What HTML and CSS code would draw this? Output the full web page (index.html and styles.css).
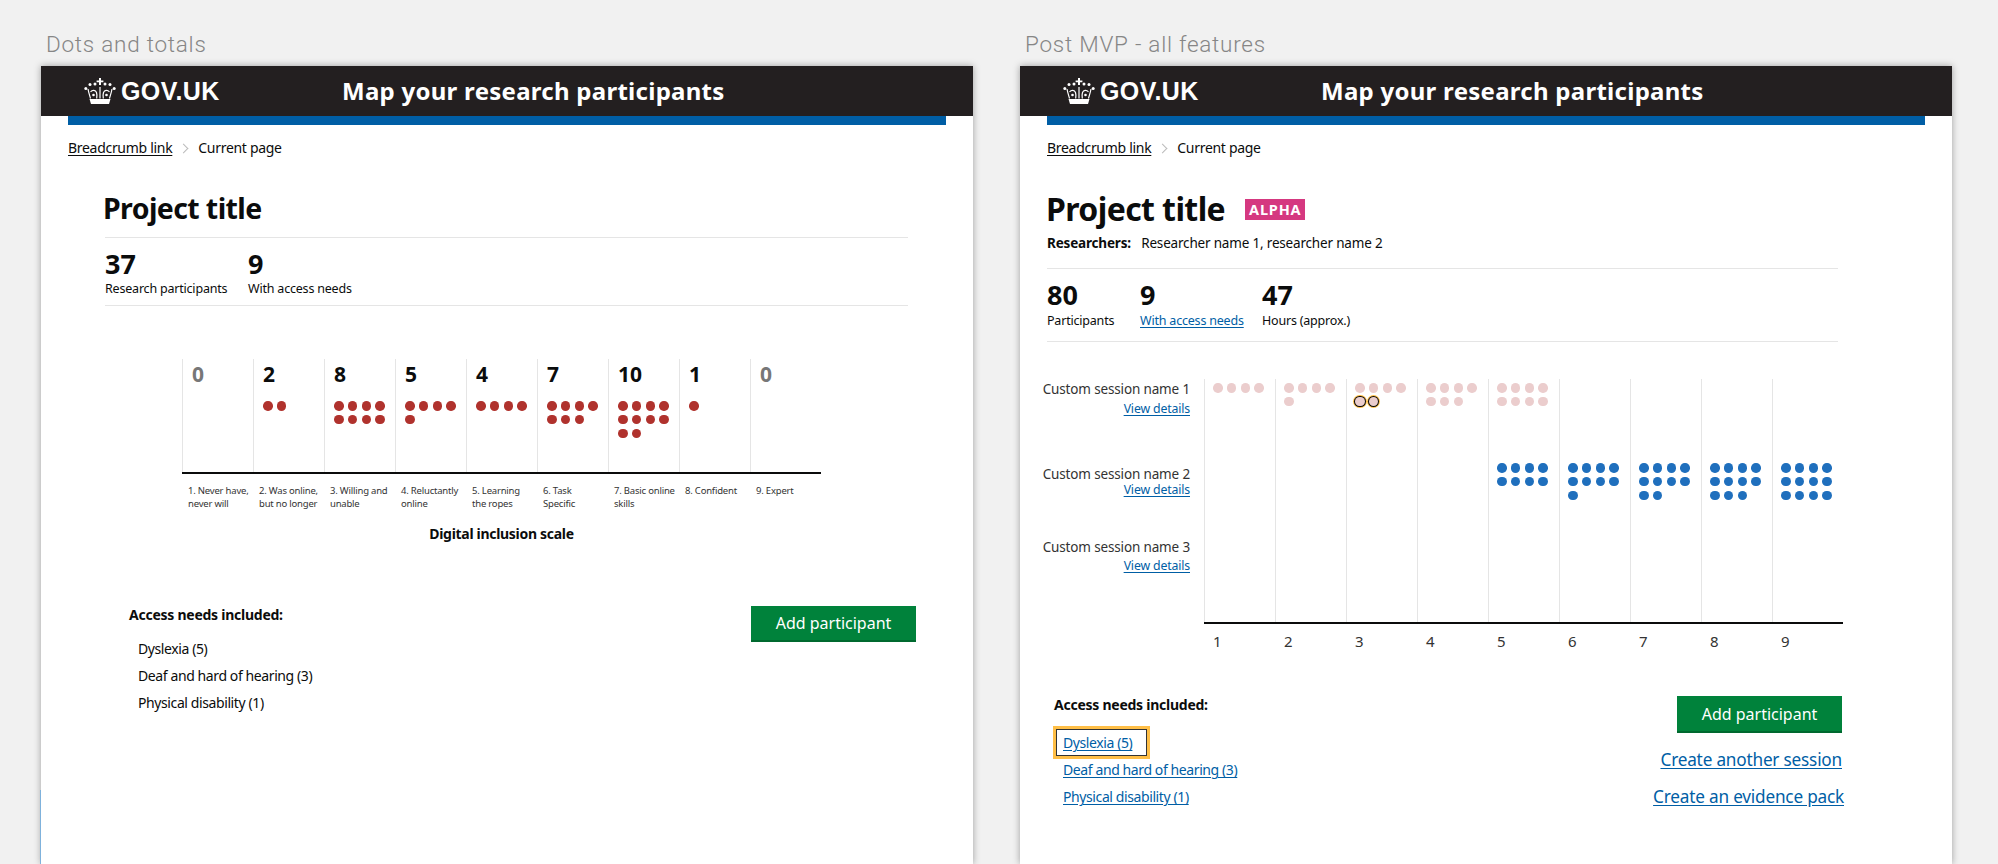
FILE: index.html
```html
<!DOCTYPE html>
<html lang="en">
  <head>
    <meta charset="UTF-8" />
    <meta name="viewport" content="width=device-width, initial-scale=1.0" />
    <title>Map your research participants</title>
    <link rel="stylesheet" href="styles.css">
  </head>
  <body>
    <div class="board">
      <!-- Dots and totals -->
      <section class="artboard">
        <h2 class="artboard-name">Dots and totals</h2>
        <div class="frame">
          <span class="frame-sliver"></span>
          <header class="site-header">
            <div class="logo">
              <svg class="crown" viewBox="0 0 32 26" aria-hidden="true">
                <path class="crown-fill" d="M15 0h2v2.500h2.400v1.800H17V7h-2V4.300h-2.400V2.500H15z" />
                <path class="crown-fill" d="M5.500 21h21l-1.500 5H7z" />
                <path class="crown-line" d="M4 11c.5 3 1.500 6 2.500 9.500M28 11c-.5 3-1.500 6-2.500 9.500M6.500 14c2-2.500 5-2 6 .5.500 1.500.500 4 .2 6M25.500 14c-2-2.500-5-2-6 .5-.5 1.500-.5 4-.2 6M16 9v11.500" />
                <circle class="crown-fill" cx="1.800" cy="10.500" r="1.500" />
                <circle class="crown-fill" cx="6" cy="6.500" r="1.500" />
                <circle class="crown-fill" cx="11" cy="6" r="1.500" />
                <circle class="crown-fill" cx="21" cy="6" r="1.500" />
                <circle class="crown-fill" cx="26" cy="6.500" r="1.500" />
                <circle class="crown-fill" cx="30.200" cy="10.500" r="1.500" />
                <circle class="crown-fill" cx="9.500" cy="17" r="1.300" />
                <circle class="crown-fill" cx="22.500" cy="17" r="1.300" />
              </svg>
              <span class="logo-text">GOV.UK</span>
            </div>
            <span class="service-name">Map your research participants</span>
          </header>
          <div class="header-bar"></div>
          <nav class="breadcrumb">
            <a href="#">Breadcrumb link</a>
            <span class="chevron"></span>
            <span>Current page</span>
          </nav>

          <div class="content content-dots">
            <h1 class="project-title">Project title</h1>
            <div class="stats">
              <div class="stat stat-research">
                <div class="stat-number">37</div>
                <div class="stat-label">Research participants</div>
              </div>
              <div class="stat">
                <div class="stat-number">9</div>
                <div class="stat-label">With access needs</div>
              </div>
            </div>

            <div class="scale">
              <div class="scale-plot">
                <div class="scale-col"><div class="scale-count muted">0</div></div>
                <div class="scale-col"><div class="scale-count">2</div><div class="dots"><i></i><i></i></div></div>
                <div class="scale-col"><div class="scale-count">8</div><div class="dots"><i></i><i></i><i></i><i></i><i></i><i></i><i></i><i></i></div></div>
                <div class="scale-col"><div class="scale-count">5</div><div class="dots"><i></i><i></i><i></i><i></i><i></i></div></div>
                <div class="scale-col"><div class="scale-count">4</div><div class="dots"><i></i><i></i><i></i><i></i></div></div>
                <div class="scale-col"><div class="scale-count">7</div><div class="dots"><i></i><i></i><i></i><i></i><i></i><i></i><i></i></div></div>
                <div class="scale-col"><div class="scale-count">10</div><div class="dots"><i></i><i></i><i></i><i></i><i></i><i></i><i></i><i></i><i></i><i></i></div></div>
                <div class="scale-col"><div class="scale-count">1</div><div class="dots"><i></i></div></div>
                <div class="scale-col"><div class="scale-count muted">0</div></div>
              </div>
              <div class="scale-labels">
                <span>1. Never have,<br />never will</span>
                <span>2. Was online,<br />but no longer</span>
                <span>3. Willing and<br />unable</span>
                <span>4. Reluctantly<br />online</span>
                <span>5. Learning<br />the ropes</span>
                <span>6. Task<br />Specific</span>
                <span>7. Basic online<br />skills</span>
                <span>8. Confident</span>
                <span>9. Expert</span>
              </div>
              <div class="scale-caption">Digital inclusion scale</div>
            </div>

            <div class="lower">
              <div>
                <div class="needs-title">Access needs included:</div>
                <ul class="needs">
                  <li>Dyslexia (5)</li>
                  <li>Deaf and hard of hearing (3)</li>
                  <li>Physical disability (1)</li>
                </ul>
              </div>
              <button class="add-button">Add participant</button>
            </div>
          </div>
        </div>
      </section>

      <!-- Post MVP -->
      <section class="artboard">
        <h2 class="artboard-name">Post MVP - all features</h2>
        <div class="frame">
          <header class="site-header">
            <div class="logo">
              <svg class="crown" viewBox="0 0 32 26" aria-hidden="true">
                <path class="crown-fill" d="M15 0h2v2.500h2.400v1.800H17V7h-2V4.300h-2.400V2.500H15z" />
                <path class="crown-fill" d="M5.500 21h21l-1.500 5H7z" />
                <path class="crown-line" d="M4 11c.5 3 1.500 6 2.500 9.500M28 11c-.5 3-1.500 6-2.500 9.500M6.500 14c2-2.500 5-2 6 .5.500 1.500.500 4 .2 6M25.500 14c-2-2.500-5-2-6 .5-.5 1.500-.5 4-.2 6M16 9v11.500" />
                <circle class="crown-fill" cx="1.800" cy="10.500" r="1.500" />
                <circle class="crown-fill" cx="6" cy="6.500" r="1.500" />
                <circle class="crown-fill" cx="11" cy="6" r="1.500" />
                <circle class="crown-fill" cx="21" cy="6" r="1.500" />
                <circle class="crown-fill" cx="26" cy="6.500" r="1.500" />
                <circle class="crown-fill" cx="30.200" cy="10.500" r="1.500" />
                <circle class="crown-fill" cx="9.500" cy="17" r="1.300" />
                <circle class="crown-fill" cx="22.500" cy="17" r="1.300" />
              </svg>
              <span class="logo-text">GOV.UK</span>
            </div>
            <span class="service-name">Map your research participants</span>
          </header>
          <div class="header-bar"></div>
          <nav class="breadcrumb">
            <a href="#">Breadcrumb link</a>
            <span class="chevron"></span>
            <span>Current page</span>
          </nav>

          <div class="content content-full">
            <div class="title-row">
              <h1 class="project-title">Project title</h1>
              <strong class="phase-tag">ALPHA</strong>
            </div>
            <p class="researchers"><b>Researchers:</b> Researcher name 1, researcher name 2</p>
            <div class="stats">
              <div class="stat stat-participants">
                <div class="stat-number">80</div>
                <div class="stat-label">Participants</div>
              </div>
              <div class="stat stat-needs">
                <div class="stat-number">9</div>
                <div class="stat-label"><a href="#">With access needs</a></div>
              </div>
              <div class="stat">
                <div class="stat-number">47</div>
                <div class="stat-label">Hours (approx.)</div>
              </div>
            </div>

            <div class="sessions">
              <div class="session-names">
                <div class="session-name">Custom session name 1<a href="#">View details</a></div>
                <div class="session-name">Custom session name 2<a href="#">View details</a></div>
                <div class="session-name">Custom session name 3<a href="#">View details</a></div>
              </div>
              <div>
                <div class="session-plot">
                  <div class="session-col">
                    <div class="dots session-one"><i></i><i></i><i></i><i></i></div>
                    <div class="dots session-two"></div>
                  </div>
                  <div class="session-col">
                    <div class="dots session-one"><i></i><i></i><i></i><i></i><i></i></div>
                    <div class="dots session-two"></div>
                  </div>
                  <div class="session-col">
                    <div class="dots session-one"><i></i><i></i><i></i><i></i><i class="selected"></i><i class="selected"></i></div>
                    <div class="dots session-two"></div>
                  </div>
                  <div class="session-col">
                    <div class="dots session-one"><i></i><i></i><i></i><i></i><i></i><i></i><i></i></div>
                    <div class="dots session-two"></div>
                  </div>
                  <div class="session-col">
                    <div class="dots session-one"><i></i><i></i><i></i><i></i><i></i><i></i><i></i><i></i></div>
                    <div class="dots session-two"><i></i><i></i><i></i><i></i><i></i><i></i><i></i><i></i></div>
                  </div>
                  <div class="session-col">
                    <div class="dots session-one"></div>
                    <div class="dots session-two"><i></i><i></i><i></i><i></i><i></i><i></i><i></i><i></i><i></i></div>
                  </div>
                  <div class="session-col">
                    <div class="dots session-one"></div>
                    <div class="dots session-two"><i></i><i></i><i></i><i></i><i></i><i></i><i></i><i></i><i></i><i></i></div>
                  </div>
                  <div class="session-col">
                    <div class="dots session-one"></div>
                    <div class="dots session-two"><i></i><i></i><i></i><i></i><i></i><i></i><i></i><i></i><i></i><i></i><i></i></div>
                  </div>
                  <div class="session-col">
                    <div class="dots session-one"></div>
                    <div class="dots session-two"><i></i><i></i><i></i><i></i><i></i><i></i><i></i><i></i><i></i><i></i><i></i><i></i></div>
                  </div>
                </div>
                <div class="session-axis">
                  <span>1</span><span>2</span><span>3</span><span>4</span><span>5</span><span>6</span><span>7</span><span>8</span><span>9</span>
                </div>
              </div>
            </div>

            <div class="lower">
              <div>
                <div class="needs-title">Access needs included:</div>
                <ul class="needs">
                  <li><a class="focused" href="#">Dyslexia (5)</a></li>
                  <li><a href="#">Deaf and hard of hearing (3)</a></li>
                  <li><a href="#">Physical disability (1)</a></li>
                </ul>
              </div>
              <div class="actions">
                <button class="add-button">Add participant</button>
                <a href="#">Create another session</a>
                <a class="evidence-link" href="#">Create an evidence pack</a>
              </div>
            </div>
          </div>
        </div>
      </section>
    </div>
  </body>
</html>
```

FILE: styles.css
```css
* {
  box-sizing: border-box;
  margin: 0;
  padding: 0;
}

html,
body {
  height: 864px;
  overflow: hidden;
}

body {
  background-color: #f1f1f1;
  color: #0b0c0c;
  font-family: "Noto Sans", Arial, sans-serif;
}

a {
  color: #005ea5;
  text-underline-offset: 2px;
}

.board {
  display: flex;
  gap: 47px;
  padding-left: 41px;
}

.artboard {
  width: 932px;
}

.artboard-name {
  height: 66px;
  padding: 31px 0 0 5px;
  color: #868686;
  font-family: Roboto, Arial, sans-serif;
  font-size: 22.500px;
  font-weight: 300;
  line-height: 26px;
  letter-spacing: 0.75px;
}

.frame {
  position: relative;
  height: 798px;
  background-color: #fff;
  box-shadow: 0 0 7px rgba(0, 0, 0, 0.35);
}

.frame-sliver {
  position: absolute;
  left: -1px;
  bottom: 0;
  width: 1px;
  height: 74px;
  background-color: #7fb2dc;
}

/* header */
.site-header {
  display: flex;
  align-items: center;
  height: 50px;
  padding-left: 43px;
  background-color: #231f20;
  color: #fff;
}

.logo {
  display: flex;
  align-items: center;
  gap: 5px;
  width: 259px;
}

.crown {
  width: 32px;
  height: 26px;
}

.crown-fill {
  fill: #fff;
}

.crown-line {
  fill: none;
  stroke: #fff;
  stroke-width: 1.2;
}

.logo-text {
  font-family: "Liberation Sans", Arial, sans-serif;
  font-size: 25px;
  font-weight: 700;
  letter-spacing: 0.4px;
}

.service-name {
  margin: -2px 0 0 -1px;
  font-size: 24px;
  font-weight: 700;
  letter-spacing: 0.27px;
}

.header-bar {
  height: 9px;
  margin: 0 27px;
  background-color: #005ea5;
}

.breadcrumb {
  display: flex;
  align-items: center;
  margin: 13px 0 0 27px;
  font-size: 14px;
  line-height: 20px;
  letter-spacing: -0.3px;
}

.breadcrumb a {
  color: #0b0c0c;
}

.chevron {
  width: 7px;
  height: 7px;
  margin: 0 11px 0 8px;
  border-top: 1px solid #bbb;
  border-right: 1px solid #bbb;
  transform: rotate(45deg);
}

/* project summary */
.content-dots {
  padding: 30px 0 0 64px;
}

.content-full {
  padding: 31px 0 0 27px;
}

.project-title {
  margin-left: -2px;
  font-size: 28.500px;
  line-height: 40px;
  letter-spacing: -0.6px;
}

.title-row {
  display: flex;
  align-items: center;
  gap: 20px;
}

.content-full .project-title {
  margin-left: -1px;
  font-size: 32px;
}

.phase-tag {
  margin-top: 1px;
  padding: 0 4px;
  background-color: #d53880;
  color: #fff;
  font-size: 14.500px;
  line-height: 21px;
  letter-spacing: 0.8px;
}

.researchers {
  margin-top: 4px;
  font-size: 13.500px;
  line-height: 20px;
  letter-spacing: -0.18px;
}

.researchers b {
  margin-right: 7px;
}

.stats {
  display: flex;
  margin-top: 9px;
  padding: 10px 0 7px;
  border-top: 1px solid #e5e5e5;
  border-bottom: 1px solid #e5e5e5;
  width: 803px;
}

.content-full .stats {
  width: 791px;
  margin-top: 15px;
  padding: 10px 0 11px;
}

.stat-research {
  width: 143px;
}

.stat-participants {
  width: 93px;
}

.stat-needs {
  width: 122px;
}

.stat-number {
  font-size: 27px;
  font-weight: 700;
  line-height: 32px;
}

.stat-label {
  font-size: 12.500px;
  line-height: 18px;
  letter-spacing: -0.2px;
}

.content-full .stat-label {
  margin-top: 1px;
}

/* digital inclusion scale */
.scale {
  width: 639px;
  margin: 53px 0 0 77px;
}

.scale-plot {
  display: grid;
  grid-template-columns: repeat(9, 71px);
  height: 115px;
  border-bottom: 2px solid #0b0c0c;
}

.scale-col {
  padding: 3px 0 0 9px;
  border-left: 1px solid #e5e5e5;
}

.scale-count {
  margin-bottom: 15px;
  font-size: 21px;
  font-weight: 700;
  line-height: 24px;
}

.muted {
  color: #777;
}

.dots {
  display: grid;
  grid-template-columns: repeat(4, 9.500px);
  grid-auto-rows: 9.500px;
  gap: 4.300px;
}

.dots i {
  border-radius: 50%;
  background-color: #b0322d;
}

.scale-labels {
  display: grid;
  grid-template-columns: repeat(9, 71px);
  margin-top: 10px;
  color: #333;
  font-size: 9.500px;
  line-height: 13px;
  letter-spacing: -0.2px;
}

.scale-labels span {
  height: 26px;
  padding-left: 6px;
}

.scale-caption {
  margin-top: 14px;
  font-size: 14px;
  font-weight: 700;
  line-height: 20px;
  letter-spacing: -0.3px;
  text-align: center;
}

/* access needs and actions */
.lower {
  display: flex;
  align-items: flex-start;
  justify-content: space-between;
  width: 787px;
  margin: 62px 0 0 24px;
}

.needs-title {
  margin-top: -1px;
  font-size: 14px;
  font-weight: 700;
  line-height: 20px;
  letter-spacing: -0.25px;
}

.needs {
  margin: 10px 0 0 9px;
  list-style: none;
  font-size: 14px;
  line-height: 27px;
  letter-spacing: -0.4px;
}

.add-button {
  width: 165px;
  height: 36px;
  border: none;
  border-bottom: 2px solid #00692f;
  background-color: #00823b;
  color: #fff;
  font-family: inherit;
  font-size: 16px;
  line-height: 1;
}

.content-full .lower {
  width: 788px;
  margin: 45px 0 0 7px;
}

.content-full .needs {
  margin-top: 14px;
}

.needs a {
  text-decoration-thickness: 1px;
}

.needs .focused {
  display: inline-block;
  margin-left: -7px;
  padding: 0 14px 0 6px;
  border: 1px solid #333;
  outline: 3px solid #ffbf47;
  line-height: 25px;
}

.actions {
  display: flex;
  flex-direction: column;
  align-items: flex-end;
  font-size: 17.200px;
  line-height: 24px;
  letter-spacing: -0.2px;
}

.actions .add-button {
  height: 37px;
  margin-bottom: 15px;
  letter-spacing: 0;
}

.evidence-link {
  margin: 13px -2px 0 0;
}

/* sessions chart */
.sessions {
  display: flex;
  margin: 37px 0 0 -7px;
}

.session-names {
  width: 150px;
  margin-right: 14px;
  padding-top: 2px;
  color: #333;
  font-size: 13.500px;
  line-height: 16px;
  letter-spacing: -0.15px;
  text-align: right;
  white-space: nowrap;
}

.session-name a {
  display: block;
  margin-top: 4px;
  font-size: 12.300px;
}

.session-name:nth-child(2) {
  margin-top: 49px;
}

.session-name:nth-child(2) a {
  margin-top: 0;
}

.session-name:nth-child(3) {
  margin-top: 41px;
}

.session-name:nth-child(3) a {
  margin-top: 3px;
}

.session-plot {
  display: grid;
  grid-template-columns: repeat(9, 71px);
  height: 245px;
  border-bottom: 2px solid #0b0c0c;
}

.session-col {
  padding: 4px 0 0 8px;
  border-left: 1px solid #e5e5e5;
}

.session-one {
  height: 80px;
}

.session-one i {
  background-color: #ebcdcd;
}

.session-two i {
  background-color: #1f6fbd;
}

.dots .selected {
  box-shadow: 0 0 0 1px #0b0c0c, 0 0 0 2px #ffbf47;
}

.session-axis {
  display: grid;
  grid-template-columns: repeat(9, 71px);
  margin-top: 7px;
  color: #333;
  font-size: 15px;
  line-height: 20px;
}

.session-axis span {
  padding-left: 9px;
}
```
